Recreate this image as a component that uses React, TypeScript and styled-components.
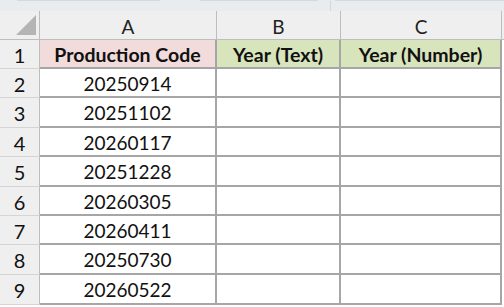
import React from "react";
import styled, { createGlobalStyle } from "styled-components";

const Global = createGlobalStyle`
  html, body { margin: 0; padding: 0; background: #ffffff; }
  body { font-family: Lato, "Open Sans", sans-serif; }
`;

const FONT = `Lato, "Open Sans", "Liberation Sans", sans-serif`;

const Page = styled.div`
  width: 504px;
  height: 307px;
  overflow: hidden;
  display: flex;
  flex-direction: column;
  background: #ffffff;
`;

const TopStrip = styled.div`
  height: 11px;
  flex: none;
  display: flex;
  background: #e9ecef;
`;

const StripSeg = styled.div<{ $w: number; $line?: boolean; $divider?: boolean }>`
  width: ${(p) => p.$w}px;
  flex: none;
  height: 100%;
  box-sizing: border-box;
  border-top: 1px solid ${(p) => (p.$line ? "#d5d8dc" : "transparent")};
  border-right: ${(p) => (p.$divider ? "1px solid #d5d8dc" : "none")};
`;

const Grid = styled.div<{ $rows: string }>`
  display: grid;
  grid-template-columns: 40px 177px 124px 161px 2px;
  grid-template-rows: 29px ${(p) => p.$rows};
  font-family: ${FONT};
`;

const Corner = styled.div`
  position: relative;
  background: #efefef;
  box-sizing: border-box;
  border-right: 1px solid #bdbdbd;
  border-bottom: 1px solid #bdbdbd;
`;

const CornerTriangle = styled.svg`
  position: absolute;
  left: 16px;
  top: 4px;
`;

const ColHead = styled.div`
  background: #efefef;
  box-sizing: border-box;
  border-right: 1px solid #bdbdbd;
  border-bottom: 1px solid #bdbdbd;
  display: flex;
  align-items: center;
  justify-content: center;
  font-size: 19px;
  color: #222222;
  padding-top: 2px;
`;

const RowHead = styled.div`
  background: #efefef;
  box-sizing: border-box;
  border-right: 1px solid #bdbdbd;
  border-bottom: 1px solid #d4d4d4;
  display: flex;
  align-items: center;
  justify-content: center;
  font-size: 20px;
  color: #111111;
  padding-top: 1px;
`;

const Cell = styled.div<{ $bg?: string; $bold?: boolean }>`
  background: ${(p) => p.$bg || "#ffffff"};
  box-sizing: border-box;
  border-right: 2px solid #a6a6a6;
  border-bottom: 2px solid #a6a6a6;
  display: flex;
  align-items: center;
  justify-content: center;
  font-size: ${(p) => (p.$bold ? "19.5px" : "19px")};
  font-weight: ${(p) => (p.$bold ? 700 : 400)};
  color: #111111;
  white-space: nowrap;
  padding-top: 1px;
`;

const Edge = styled.div`
  background: #ffffff;
`;

const EdgeHead = styled.div`
  background: #efefef;
  border-bottom: 1px solid #bdbdbd;
  box-sizing: border-box;
`;

const codes = [
  "20250914",
  "20251102",
  "20260117",
  "20251228",
  "20260305",
  "20260411",
  "20250730",
  "20260522",
];

const rowHeights = [29, 29, 30, 29, 30, 29, 29, 30, 30];

export default function App() {
  return (
    <Page>
      <Global />
      <TopStrip>
        <StripSeg $w={17} />
        <StripSeg $w={143} $line />
        <StripSeg $w={40} />
        <StripSeg $w={118} $line />
        <StripSeg $w={13} $divider />
        <StripSeg $w={4} />
        <StripSeg $w={169} $line />
      </TopStrip>
      <Grid $rows={rowHeights.map((h) => `${h}px`).join(" ")}>
        <Corner>
          <CornerTriangle width="20" height="20" viewBox="0 0 20 20">
            <polygon points="0,20 20,20 20,0" fill="#b4b4b4" />
          </CornerTriangle>
        </Corner>
        <ColHead>A</ColHead>
        <ColHead>B</ColHead>
        <ColHead>C</ColHead>
        <EdgeHead />

        <RowHead>1</RowHead>
        <Cell $bg="#f2dcdb" $bold>Production Code</Cell>
        <Cell $bg="#d8e4bc" $bold>Year (Text)</Cell>
        <Cell $bg="#d8e4bc" $bold>Year (Number)</Cell>
        <Edge />

        {codes.map((c, i) => (
          <React.Fragment key={c}>
            <RowHead>{i + 2}</RowHead>
            <Cell>{c}</Cell>
            <Cell />
            <Cell />
            <Edge />
          </React.Fragment>
        ))}
      </Grid>
    </Page>
  );
}
